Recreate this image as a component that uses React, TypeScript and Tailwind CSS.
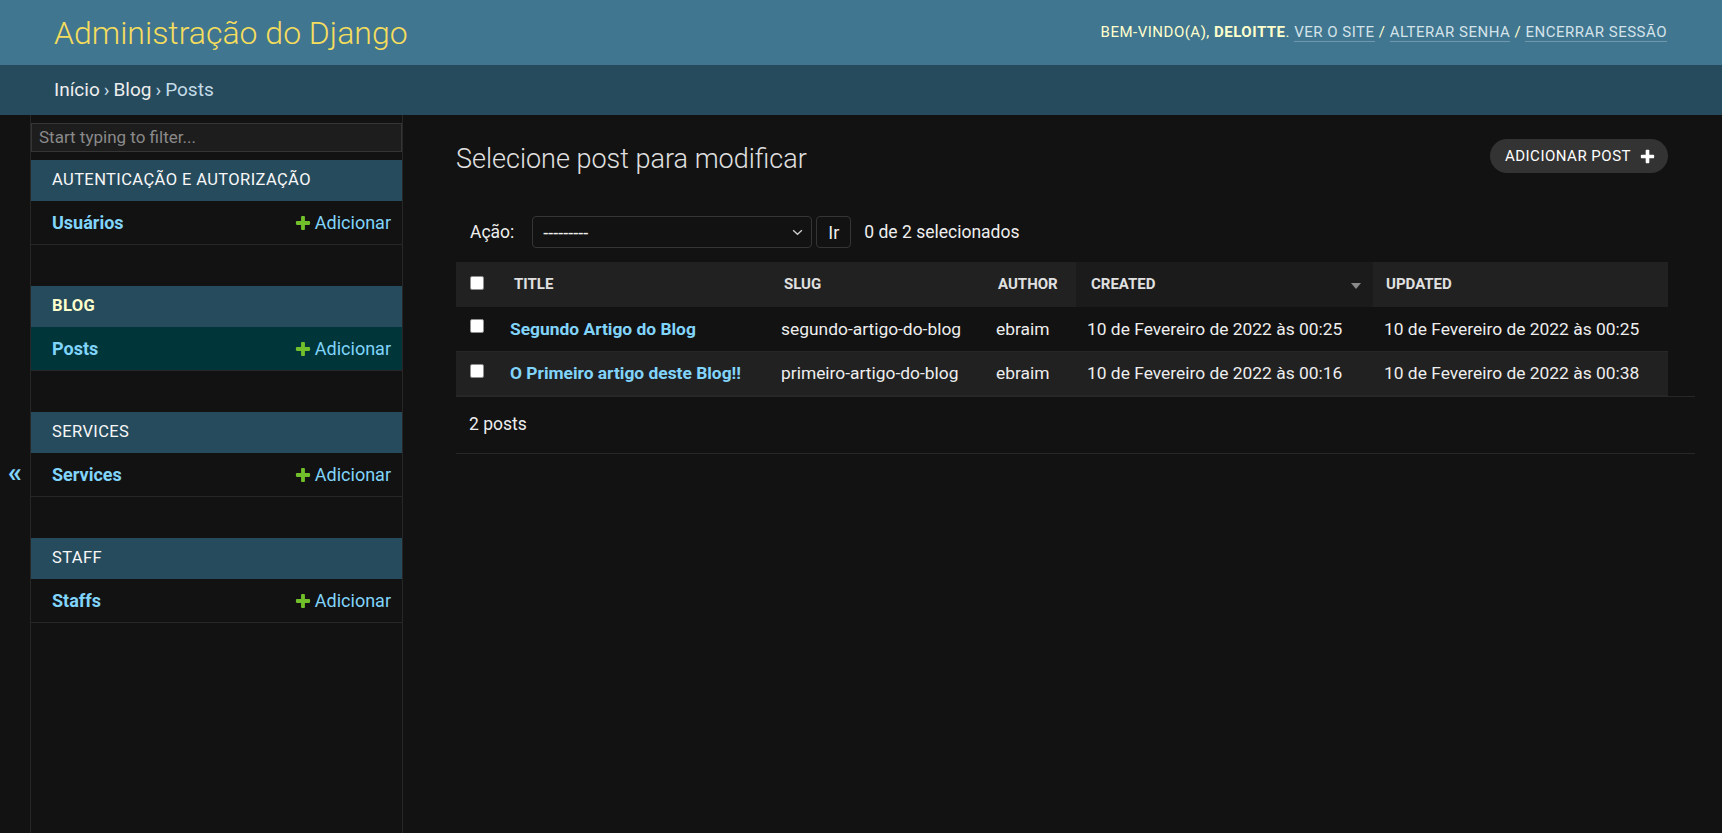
import React from 'react';

const PlusIcon = ({ className }: { className?: string }) => (
  <svg viewBox="0 0 1792 1792" className={className} fill="currentColor">
    <path d="M1600 796v192q0 40-28 68t-68 28h-416v416q0 40-28 68t-68 28h-192q-40 0-68-28t-28-68v-416h-416q-40 0-68-28t-28-68v-192q0-40 28-68t68-28h416v-416q0-40 28-68t68-28h192q40 0 68 28t28 68v416h416q40 0 68 28t28 68z" />
  </svg>
);

const Checkbox = () => (
  <span className="block w-[14px] h-[14px] bg-white rounded-[2px] border border-[#8f8f8f]" />
);

const modules = [
  { name: 'Autenticação e Autorização', current: false, models: ['Usuários'] },
  { name: 'Blog', current: true, models: ['Posts'] },
  { name: 'Services', current: false, models: ['Services'] },
  { name: 'Staff', current: false, models: ['Staffs'] },
];

const posts = [
  {
    title: 'Segundo Artigo do Blog',
    slug: 'segundo-artigo-do-blog',
    author: 'ebraim',
    created: '10 de Fevereiro de 2022 às 00:25',
    updated: '10 de Fevereiro de 2022 às 00:25',
  },
  {
    title: 'O Primeiro artigo deste Blog!!',
    slug: 'primeiro-artigo-do-blog',
    author: 'ebraim',
    created: '10 de Fevereiro de 2022 às 00:16',
    updated: '10 de Fevereiro de 2022 às 00:38',
  },
];

export default function App() {
  return (
    <div className="min-h-screen bg-[#121212] text-[#eeeeee] font-['Roboto','Liberation_Sans',sans-serif]">
      {/* Header */}
      <header className="h-[65px] bg-[#417690] flex items-center justify-between pl-[54px] pr-[55px]">
        <h1 className="text-[32px] font-light text-[#f5dd5d] leading-none">Administração do Django</h1>
        <div className="text-[15px] tracking-[0.5px] uppercase text-[#ffffcc]">
          Bem-vindo(a), <strong className="font-bold">deloitte</strong>.{' '}
          <a className="border-b border-white/25 text-[#d4e3ea]">Ver o site</a> /{' '}
          <a className="border-b border-white/25 text-[#d4e3ea]">Alterar senha</a> /{' '}
          <a className="border-b border-white/25 text-[#d4e3ea]">Encerrar sessão</a>
        </div>
      </header>

      {/* Breadcrumbs */}
      <div className="h-[50px] bg-[#264b5d] flex items-center pl-[54px] text-[19px] text-[#c4dce8]">
        <a className="text-[#eeeeee]">Início</a>
        <span className="mx-[4px]">›</span>
        <a className="text-[#eeeeee]">Blog</a>
        <span className="mx-[4px]">›</span>
        <span>Posts</span>
      </div>

      <div className="flex min-h-[718px]">
        {/* Toggle */}
        <div className="w-[31px] border-r border-[#272727] flex items-center justify-center text-[#81d4fa] text-[28px] font-bold leading-none pb-[2px]">
          «
        </div>

        {/* Sidebar */}
        <nav className="w-[372px] border-r border-[#272727]">
          <div className="mt-[8px] h-[29px] bg-[#1d1d1d] border border-[#353535] flex items-center px-[7px] text-[17px] text-[#8a8a8a]">
            Start typing to filter...
          </div>
          <div className="mt-[8px]">
            {modules.map((m) => (
              <div key={m.name} className="mb-[41px]">
                <div
                  className={`h-[41px] bg-[#264b5d] flex items-center pl-[21px] text-[16.5px] tracking-[0.4px] uppercase ${
                    m.current ? 'text-[#ffffcc] font-bold' : 'text-[#f7f7f7]'
                  }`}
                >
                  {m.name}
                </div>
                {m.models.map((model) => (
                  <div
                    key={model}
                    className={`h-[44px] border-b border-[#272727] flex items-center justify-between pl-[21px] pr-[11px] text-[18px] ${
                      m.current ? 'bg-[#00363a]' : ''
                    }`}
                  >
                    <a className="font-bold text-[#81d4fa]">{model}</a>
                    <a className="flex items-center gap-[3px] text-[#81d4fa]">
                      <PlusIcon className="w-[18px] h-[18px] text-[#70bf2b]" />
                      Adicionar
                    </a>
                  </div>
                ))}
              </div>
            ))}
          </div>
        </nav>

        {/* Content */}
        <main className="flex-1 pl-[53px] pr-[27px] pt-[24px]">
          <div className="flex items-start justify-between mr-[27px]">
            <h1 className="mt-[4px] text-[27px] leading-[32px] font-light text-[#e0e0e0]">
              Selecione post para modificar
            </h1>
            <a className="h-[34px] flex items-center gap-[8px] rounded-full bg-[#333333] pl-[15px] pr-[12px] text-[15px] tracking-[0.5px] uppercase text-white">
              Adicionar post
              <PlusIcon className="w-[17px] h-[17px] text-white" />
            </a>
          </div>

          {/* Actions */}
          <div className="mt-[41px] h-[32px] flex items-center pl-[14px] text-[17.5px]">
            <label className="text-[#eeeeee]">Ação:</label>
            <div className="ml-[18px] w-[280px] h-[32px] border border-[#353535] rounded-[4px] flex items-center justify-between pl-[10px] pr-[8px]">
              <span className="text-[18px]">---------</span>
              <svg viewBox="0 0 12 8" className="w-[11px] h-[7px]" fill="none" stroke="#cccccc" strokeWidth="1.6">
                <path d="M1 1.5l5 4.5 5-4.5" />
              </svg>
            </div>
            <button className="ml-[4px] w-[35px] h-[32px] border border-[#353535] rounded-[4px] text-[18px]">
              Ir
            </button>
            <span className="ml-[13px]">0 de 2 selecionados</span>
          </div>

          {/* Results table */}
          <table className="mt-[14px] w-[1212px] border-collapse table-fixed">
            <colgroup>
              <col className="w-[43px]" />
              <col className="w-[271px]" />
              <col className="w-[215px]" />
              <col className="w-[91px]" />
              <col className="w-[297px]" />
              <col className="w-[295px]" />
            </colgroup>
            <thead>
              <tr className="h-[45px] bg-[#212121] text-[15px] font-bold uppercase text-[#e0e0e0] text-left">
                <th className="pl-[14px] align-middle">
                  <div className="-mt-[4px]">
                    <Checkbox />
                  </div>
                </th>
                <th className="pl-[15px]">Title</th>
                <th className="pl-[14px]">Slug</th>
                <th className="pl-[13px]">Author</th>
                <th className="pl-[15px] pr-[12px] bg-[#1b1b1b]">
                  <div className="flex items-center justify-between">
                    <span>Created</span>
                    <svg viewBox="0 0 10 6" className="w-[10px] h-[6px] mt-[3px]">
                      <path d="M0 0h10L5 6z" fill="#8a8a8a" />
                    </svg>
                  </div>
                </th>
                <th className="pl-[13px]">Updated</th>
              </tr>
            </thead>
            <tbody className="text-[17.4px]">
              {posts.map((p, i) => (
                <tr
                  key={p.slug}
                  className={`h-[44px] border-b border-[#272727] ${i % 2 === 1 ? 'bg-[#212121]' : 'bg-[#121212]'}`}
                >
                  <td className="pl-[14px]">
                    <div className="-mt-[5px]">
                      <Checkbox />
                    </div>
                  </td>
                  <td className="pl-[11px] font-bold text-[#81d4fa] whitespace-nowrap">{p.title}</td>
                  <td className="pl-[11px] whitespace-nowrap">{p.slug}</td>
                  <td className="pl-[11px]">{p.author}</td>
                  <td className="pl-[11px] whitespace-nowrap">{p.created}</td>
                  <td className="pl-[11px] whitespace-nowrap">{p.updated}</td>
                </tr>
              ))}
            </tbody>
          </table>

          {/* Paginator */}
          <div className="h-[58px] border-t border-b border-[#272727] flex items-center pl-[13px] text-[17.5px]">
            2 posts
          </div>
        </main>
      </div>
    </div>
  );
}
